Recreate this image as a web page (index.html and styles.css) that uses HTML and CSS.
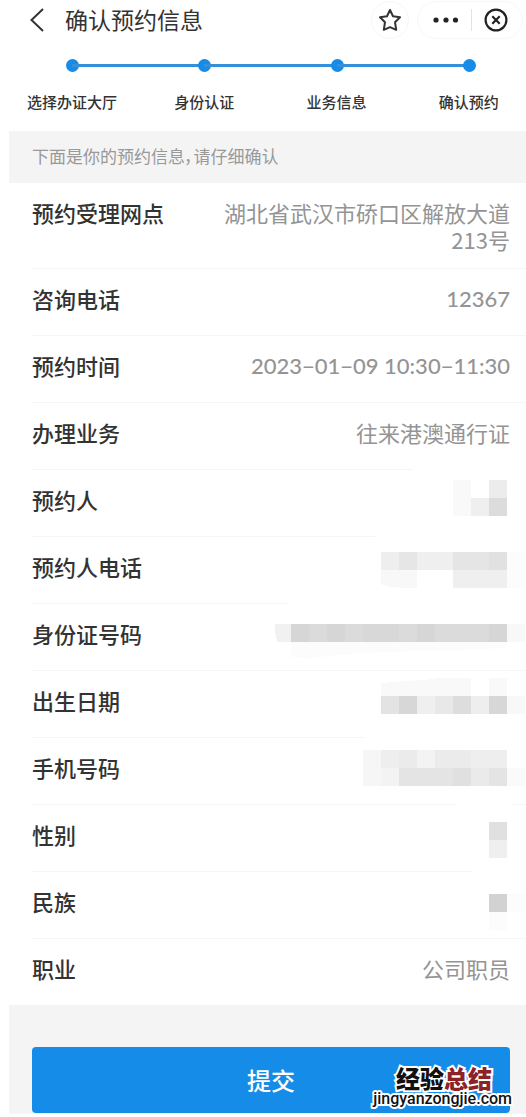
FILE: index.html
```html
<!DOCTYPE html>
<html lang="zh-CN">
<head>
<meta charset="utf-8">
<meta name="viewport" content="width=device-width, initial-scale=1">
<title>确认预约信息</title>
<link rel="stylesheet" href="styles.css">
</head>
<body>
<main class="page">
  <header class="topbar">
    <button class="icon-btn back" aria-label="返回">
      <svg width="16" height="26" viewBox="0 0 16 26" fill="none" stroke="#333" stroke-width="2"><path d="M14 2 2.500 13 14 24"/></svg>
    </button>
    <h1 class="title">确认预约信息</h1>
    <button class="icon-btn star" aria-label="收藏">
      <svg width="24" height="24" viewBox="0 0 24 24" fill="none" stroke="#333" stroke-width="2" stroke-linejoin="round"><path d="M12 2 15 8.300 22 9.300 17 14.200 18.200 21.800 12 19.200 5.800 21.800 7 14.200 2 9.300 9 8.300Z"/></svg>
    </button>
    <div class="capsule">
      <button class="icon-btn" aria-label="更多">
        <svg width="26" height="24" viewBox="0 0 26 24" fill="#222"><circle cx="3" cy="12" r="2.600"/><circle cx="13" cy="12" r="2.600"/><circle cx="22.500" cy="12" r="2.600"/></svg>
      </button>
      <span class="divider"></span>
      <button class="icon-btn" aria-label="关闭">
        <svg width="24" height="24" viewBox="0 0 24 24" fill="none" stroke="#222" stroke-width="2.200"><circle cx="12" cy="12" r="10.400"/><path d="m8.300 8.300 7.400 7.400m0-7.400-7.400 7.400"/></svg>
      </button>
    </div>
  </header>

  <ol class="steps">
    <li class="step">选择办证大厅</li>
    <li class="step">身份认证</li>
    <li class="step">业务信息</li>
    <li class="step">确认预约</li>
  </ol>

  <p class="notice">下面是你的预约信息，请仔细确认</p>

  <dl class="list">
    <div class="row tall"><dt>预约受理网点</dt><dd>湖北省武汉市硚口区解放大道213号</dd></div>
    <div class="row"><dt>咨询电话</dt><dd class="num">12367</dd></div>
    <div class="row"><dt>预约时间</dt><dd class="num">2023−01−09 10:30−11:30</dd></div>
    <div class="row"><dt>办理业务</dt><dd>往来港澳通行证</dd></div>
    <div class="row"><dt>预约人</dt><dd class="masked">
      <svg class="mosaic" width="234" height="66" viewBox="0 0 234 66">
        <path fill="#fff" d="M140-1h113v2H140z"/>
        <path fill="#f9f9f9" d="M180 10h18v36h-18z"/><path fill="#efefef" d="M198 28h18v18h-18z"/>
        <path fill="#ececec" d="M216 10h18v18h-18z"/><path fill="#dcdcdc" d="M216 28h18v18h-18z"/>
      </svg></dd></div>
    <div class="row"><dt>预约人电话</dt><dd class="masked">
      <svg class="mosaic" width="234" height="66" viewBox="0 0 234 66">
        <path fill="#fff" d="M102-1h151v2H102z"/>
        <path fill="#eee" d="M108 15h18v18h-18z"/><path fill="#e6e6e6" d="M126 15h18v18h-18z"/>
        <path fill="#efefef" d="M144 15h36v18h-36z"/><path fill="#e5e5e5" d="M180 15h36v18h-36z"/><path fill="#e1e1e1" d="M216 15h18v18h-18z"/>
        <path fill="#f8f8f8" d="M108 33h36v18q-30 0-36-4z"/><path fill="#efefef" d="M180 33h54v18h-54z"/><path fill="#fcfcfc" d="M234 15h18v36h-18z"/>
      </svg></dd></div>
    <div class="row"><dt>身份证号码</dt><dd class="masked">
      <svg class="mosaic" width="234" height="66" viewBox="0 0 234 66">
        <path fill="#fff" d="M15-1h238v2H15z"/>
        <path fill="#f1f1f1" d="M2 20h16v18H4Q2 30 2 20z"/>
        <path fill="#dbdbdb" d="M18 20h216v18H18z"/>
        <path fill="#d6d6d6" d="M18 20h18v18H18zM54 20h18v18H54zM144 20h18v18h-18zM216 20h18v18h-18z"/>
        <path fill="#d8d8d8" d="M90 20h36v18H90z"/>
        <path fill="#f8f8f8" d="M234 20h18v18h-18z"/><path fill="#fcfcfc" d="M18 38h216v6L90 49l-54 5-18-1z"/>
      </svg></dd></div>
    <div class="row"><dt>出生日期</dt><dd class="masked">
      <svg class="mosaic" width="234" height="66" viewBox="0 0 234 66">
        <path fill="#f9f9f9" d="M108 12 162 8v17h-54zM162 7h36v18h-36zM216 7h18v18h-18z"/>
        <path fill="#e3e3e3" d="M108 25h18v18h-18z"/><path fill="#d7d7d7" d="M126 25h18v18h-18z"/>
        <path fill="#efefef" d="M144 25h18v18h-18z"/><path fill="#e8e8e8" d="M162 25h18v18h-18z"/>
        <path fill="#ddd" d="M180 25h18v18h-18z"/><path fill="#eee" d="M198 25h18v18h-18z"/>
        <path fill="#d7d7d7" d="M216 25h18v18h-18z"/><path fill="#f8f8f8" d="M234 25h18v18h-18z"/>
      </svg></dd></div>
    <div class="row"><dt>手机号码</dt><dd class="masked">
      <svg class="mosaic" width="234" height="66" viewBox="0 0 234 66">
        <path fill="#fff" d="M92-1h161v2H92z"/>
        <path fill="#f6f6f6" d="M90 12h18v36H90z"/><path fill="#eee" d="M108 12h18v18h-18z"/><path fill="#ebebeb" d="M126 12h18v18h-18z"/>
        <path fill="#f3f3f3" d="M144 12h18v18h-18z"/><path fill="#ebebeb" d="M162 12h36v18h-36z"/><path fill="#eee" d="M198 12h36v18h-36z"/>
        <path fill="#f3f3f3" d="M108 30h18v18h-18z"/><path fill="#e4e4e4" d="M126 30h54v18h-54z"/><path fill="#e0e0e0" d="M180 30h18v18h-18z"/>
        <path fill="#eaeaea" d="M198 30h18v18h-18z"/><path fill="#e4e4e4" d="M216 30h18v18h-18z"/><path fill="#fafafa" d="M234 30h18v18h-18z"/>
      </svg></dd></div>
    <div class="row"><dt>性别</dt><dd class="masked">
      <svg class="mosaic" width="234" height="66" viewBox="0 0 234 66">
        <path fill="#fff" d="M183-1h57v2h-57z"/>
        <path fill="#e0e0e0" d="M216 17h18v18h-18z"/><path fill="#efefef" d="M216 35h18v18h-18z"/>
      </svg></dd></div>
    <div class="row"><dt>民族</dt><dd class="masked">
      <svg class="mosaic" width="234" height="66" viewBox="0 0 234 66">
        <path fill="#fff" d="M200-1h53v2h-53z"/>
        <path fill="#d2d2d2" d="M216 22h18v18h-18z"/><path fill="#fcfcfc" d="M216 40h18v18h-18zM234 22h18v18h-18z"/>
      </svg></dd></div>
    <div class="row"><dt>职业</dt><dd>公司职员</dd></div>
  </dl>

  <footer class="actions">
    <button class="submit">提交</button>
    <div class="watermark">
      <span class="brand">经验<span class="brand-red">总结</span></span>
      <span class="site">jingyanzongjie.com</span>
    </div>
  </footer>
</main>
</body>
</html>
```

FILE: styles.css
```css
* { box-sizing: border-box; }

body {
  margin: 0;
  background: #fff;
  color: #333;
  font-family: "Noto Sans CJK SC", sans-serif;
}

.page { padding-left: 9px; }

.topbar {
  display: flex;
  align-items: center;
  height: 40px;
  padding: 0 3px 0 20px;
}

.icon-btn {
  display: flex;
  align-items: center;
  justify-content: center;
  padding: 0;
  border: 0;
  background: none;
}

.title {
  flex: 1;
  margin: 0 0 0 20px;
  padding-bottom: 3px;
  font-size: 23px;
  line-height: 32px;
  font-weight: 400;
}

.star {
  width: 38px;
  height: 38px;
  border: 1px solid #f7f7f7;
  border-radius: 50%;
}

.capsule {
  display: flex;
  align-items: center;
  gap: 12px;
  height: 38px;
  margin-left: 8px;
  padding: 0 14px 0 15px;
  border: 1px solid #f7f7f7;
  border-radius: 19px;
}

.divider {
  width: 1px;
  height: 22px;
  background: #e2e2e2;
}

.steps {
  display: grid;
  grid-template-columns: repeat(4, 1fr);
  margin: 0 -9px 0 -3px;
  padding: 19px 0 0;
  list-style: none;
}

.step {
  position: relative;
  height: 72px;
  padding-top: 32px;
  font-size: 15px;
  line-height: 22px;
  font-weight: 500;
  text-align: center;
}

.step::before {
  content: "";
  position: absolute;
  top: 0;
  left: 50%;
  width: 13px;
  height: 13px;
  margin-left: -6px;
  border-radius: 50%;
  background: #148ce8;
}

.step:not(:last-child)::after {
  content: "";
  position: absolute;
  top: 5px;
  left: 50%;
  width: 100%;
  height: 3px;
  background: #3490d8;
}

.notice {
  margin: 0;
  padding: 13px 23px 15px;
  background: #f4f4f4;
  color: #999;
  font-size: 17px;
  line-height: 24px;
  font-feature-settings: "palt";
}

.list {
  margin: 0;
  padding-left: 23px;
}

.row {
  display: flex;
  align-items: center;
  justify-content: space-between;
  height: 67px;
  padding-right: 16px;
  border-bottom: 1px solid #f5f5f5;
  font-size: 22px;
  line-height: 27px;
}

.row:last-child {
  height: 66px;
  border-bottom: 0;
}

.row.tall {
  align-items: flex-start;
  height: auto;
  padding-top: 16px;
  padding-bottom: 7px;
}

dt {
  font-weight: 500;
  padding-bottom: 8px;
}

dd {
  max-width: 300px;
  margin: 0;
  padding-bottom: 8px;
  color: #949494;
  text-align: right;
}

.num {
  font-family: Lato, "Noto Sans CJK SC", sans-serif;
  font-weight: 500;
}

.masked {
  padding: 0 3px 0 0;
}

.mosaic {
  display: block;
  overflow: visible;
  shape-rendering: crispEdges;
}

.actions {
  position: relative;
  padding: 42px 16px 1px 23px;
  background: #f4f4f4;
}

.submit {
  display: block;
  width: 100%;
  height: 66px;
  padding: 0;
  border: 0;
  border-radius: 4px;
  background: #148ce8;
  color: #fff;
  font-family: inherit;
  font-size: 24px;
  line-height: 32px;
  font-weight: 500;
}

.watermark {
  position: absolute;
  right: 14px;
  bottom: 6px;
  display: flex;
  flex-direction: column;
  align-items: flex-end;
  color: #111;
  paint-order: stroke fill;
  -webkit-text-stroke: 4px #fff;
}

.brand {
  padding-right: 20px;
  font-size: 24px;
  line-height: 24px;
  font-weight: 900;
}

.brand-red { color: #8c2226; }

.site {
  font-family: Roboto, sans-serif;
  font-size: 16px;
  line-height: 18px;
  font-weight: 500;
}
```
